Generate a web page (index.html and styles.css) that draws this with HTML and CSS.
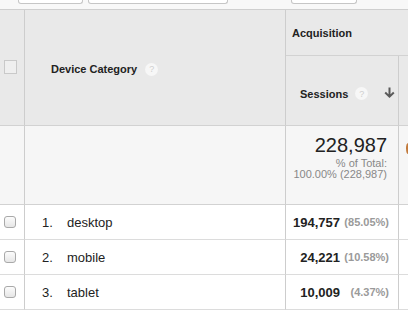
FILE: index.html
```html
<!DOCTYPE html>
<html>
<head>
<meta charset="utf-8">
<link rel="stylesheet" href="styles.css">
</head>
<body>
<div class="topbar">
  <div class="btn b1"></div>
  <div class="btn b2"></div>
  <div class="btn b3"></div>
</div>
<div class="grid">
  <div class="cell hd chk-cell span2"><span class="hcheck"></span></div>
  <div class="cell hd dim span2">Device Category <span class="help">?</span></div>
  <div class="cell hd acq">Acquisition</div>
  <div class="cell hd sess">Sessions <span class="help">?</span>
    <svg class="arrow" width="11" height="11" viewBox="0 0 11 11"><path d="M5.5 0.5 V9.5 M1.2 5.5 L5.5 9.6 L9.8 5.5" fill="none" stroke="#5a5a5a" stroke-width="2"/></svg>
  </div>
  <div class="cell hd last"></div>

  <div class="cell sum"></div>
  <div class="cell sum"></div>
  <div class="cell sum total">
    <div class="big">228,987</div>
    <div class="small first">% of Total:</div>
    <div class="small">100.00% (228,987)</div>
  </div>
  <div class="cell sum last"><span class="peek"></span></div>

  <div class="cell row chk-cell"><span class="rcheck"></span></div>
  <div class="cell row name"><span class="idx">1.</span>desktop</div>
  <div class="cell row val"><b>194,757</b><span class="pct">(85.05%)</span></div>
  <div class="cell row last"></div>

  <div class="cell row chk-cell"><span class="rcheck"></span></div>
  <div class="cell row name"><span class="idx">2.</span>mobile</div>
  <div class="cell row val"><b>24,221</b><span class="pct">(10.58%)</span></div>
  <div class="cell row last"></div>

  <div class="cell row chk-cell"><span class="rcheck"></span></div>
  <div class="cell row name"><span class="idx">3.</span>tablet</div>
  <div class="cell row val"><b>10,009</b><span class="pct">(4.37%)</span></div>
  <div class="cell row last"></div>
</div>
</body>
</html>
```
FILE: styles.css
```css
* { box-sizing: border-box; }
html, body { margin: 0; padding: 0; background: #fff; }
body {
  font-family: "Liberation Sans", Arial, sans-serif;
  color: #222;
  width: 408px;
  height: 330px;
  overflow: hidden;
}
.topbar {
  height: 10px;
  display: flex;
  padding-left: 18px;
  background: #f8f8f8;
  border-bottom: 1px solid #cfcfcf;
}
.btn {
  height: 4px;
  background: #fff;
  border: 1px solid #c6c6c6;
  border-top: none;
  border-radius: 0 0 3px 3px;
}
.b1 { width: 65px; }
.b2 { width: 140px; margin-left: 5px; }
.b3 { width: 66px; margin-left: 63px; }

.grid {
  display: grid;
  grid-template-columns: 25px 261px 113px 1fr;
  grid-template-rows: 46px 70px 79px 35px 35px 35px;
  width: 420px;
}
.cell {
  border-right: 1px solid #cdcdcd;
  border-bottom: 1px solid #d2d2d2;
  display: flex;
  align-items: center;
}
.cell.last { border-right: none; }
.hd { background: #e9e9e9; font-weight: bold; font-size: 11px; color: #222; }
.span2 { grid-row: span 2; }
.chk-cell { padding-left: 4px; }
.hcheck {
  width: 13px; height: 14px;
  border: 1px solid #c9c9c9;
  background: #efefef;
  margin-top: -2px;
}
.dim { padding-left: 26px; padding-top: 3px; }
.acq { grid-column: span 2; padding-left: 6px; border-right: none; }
.sess { padding-left: 14px; padding-top: 6px; }
.help {
  display: inline-flex;
  align-items: center;
  justify-content: center;
  width: 13px; height: 13px;
  border-radius: 50%;
  background: #f7f7f7;
  color: #cfcfcf;
  font-size: 9px;
  font-weight: normal;
  margin-left: 8px;
}
.sess .help { margin-left: 7px; }
.arrow { margin-left: 16px; margin-top: -2px; }

.sum { background: #f6f6f6; }
.total {
  flex-direction: column;
  align-items: flex-end;
  justify-content: flex-start;
  padding: 8px 11px 0 0;
}
.big { font-size: 20px; line-height: 23px; color: #222; }
.small { font-size: 11px; line-height: 11px; color: #888; }
.small.first { margin-top: 1px; }
.peek {
  width: 4px; height: 11px;
  border-left: 2px solid #c27a3c;
  border-radius: 50% 0 0 50%;
  margin-left: 7px;
  margin-top: -33px;
}

.row { background: #fff; font-size: 13px; color: #222; border-bottom-color: #dcdcdc; }
.rcheck {
  width: 12px; height: 12px;
  border: 1px solid #a9a9a9;
  border-radius: 3px;
  background: linear-gradient(#fcfcfc, #e6e6e6);
}
.name { padding-left: 17px; }
.idx { display: inline-block; width: 25px; }
.val { justify-content: flex-end; padding-right: 9px; }
.val b { font-weight: bold; }
.pct {
  display: inline-block;
  width: 49px;
  text-align: right;
  font-size: 11px;
  font-weight: bold;
  color: #9a9a9a;
}
```
